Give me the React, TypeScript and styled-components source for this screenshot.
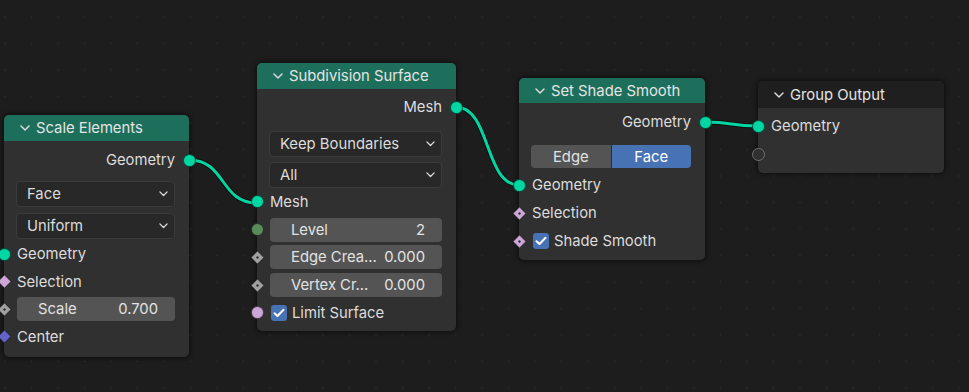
import React from "react";
import styled, { createGlobalStyle } from "styled-components";

const GlobalStyle = createGlobalStyle`
    html, body {
        margin: 0;
        padding: 0;
        background: #1d1d1d;
    }
    * {
        box-sizing: border-box;
    }
`;

const GEO = "#00d6a3";

type SocketShape = "circle" | "diamond" | "diamondDot" | "hollow";

interface SocketDef {
    shape: SocketShape;
    color: string;
}

const Canvas = styled.div`
    position: relative;
    width: 969px;
    height: 392px;
    overflow: hidden;
    background-color: #1d1d1d;
    background-image: radial-gradient(circle, #262626 0.9px, transparent 1.3px);
    background-size: 26.5px 26.5px;
    background-position: -8.25px 3.75px;
    font-family: "Inter", "Noto Sans", "DejaVu Sans", sans-serif;
    font-size: 14.8px;
    color: #dcdcdc;
`;

const Links = styled.svg`
    position: absolute;
    left: 0;
    top: 0;
`;

const NodeBox = styled.div<{ $x: number; $y: number; $w: number }>`
    position: absolute;
    left: ${(p) => p.$x}px;
    top: ${(p) => p.$y}px;
    width: ${(p) => p.$w}px;
    background: #303030;
    border-radius: 5px;
    box-shadow: 0 0 5px 1px rgba(0, 0, 0, 0.55);
`;

const Header = styled.div<{ $h: number; $bg: string }>`
    height: ${(p) => p.$h}px;
    background: ${(p) => p.$bg};
    border-radius: 5px 5px 0 0;
    display: flex;
    align-items: center;
    gap: 6px;
    padding-left: 16px;
    color: #e4e4e4;
    white-space: nowrap;
`;

const Body = styled.div<{ $pt: number; $pb: number }>`
    display: flex;
    flex-direction: column;
    padding: ${(p) => p.$pt}px 0 ${(p) => p.$pb}px;
`;

const Row = styled.div<{ $h: number; $out?: boolean }>`
    position: relative;
    height: ${(p) => p.$h}px;
    display: flex;
    align-items: center;
    justify-content: ${(p) => (p.$out ? "flex-end" : "flex-start")};
    padding: 0 14px 0 13px;
    white-space: nowrap;
`;

const Spacer = styled.div<{ $h: number }>`
    height: ${(p) => p.$h}px;
`;

const WidgetRow = styled.div<{ $mt: number }>`
    margin-top: ${(p) => p.$mt}px;
    padding: 0 14px 0 12px;
`;

const Socket = styled.span<{ $shape: SocketShape; $color: string; $out?: boolean }>`
    position: absolute;
    top: 50%;
    ${(p) => (p.$out ? "right: -6.5px;" : "left: -6.5px;")}
    width: 13px;
    height: 13px;
    margin-top: -6.5px;
    display: flex;
    align-items: center;
    justify-content: center;
    background: ${(p) => (p.$shape === "hollow" ? "#303030" : p.$color)};
    border: 1px solid ${(p) => (p.$shape === "hollow" ? "#707070" : "rgba(0,0,0,0.6)")};
    border-radius: ${(p) => (p.$shape === "circle" || p.$shape === "hollow" ? "50%" : "1px")};
    transform: ${(p) => (p.$shape === "circle" || p.$shape === "hollow" ? "none" : "rotate(45deg) scale(0.76)")};

    &::after {
        content: "";
        display: ${(p) => (p.$shape === "diamondDot" ? "block" : "none")};
        width: 3px;
        height: 3px;
        background: #2a2a2a;
        border-radius: 1px;
    }
`;

const Dropdown = styled.div`
    height: 26px;
    background: #282828;
    border: 1px solid #3b3b3b;
    border-radius: 4px;
    display: flex;
    align-items: center;
    justify-content: space-between;
    padding: 0 6px 0 10px;
`;

const Field = styled.div`
    height: 24px;
    width: 100%;
    background: #545454;
    border-radius: 4px;
    display: flex;
    align-items: center;
    justify-content: space-between;
    padding: 0 17px 0 21px;
    color: #e2e2e2;
`;

const Toggle = styled.div`
    height: 23px;
    display: flex;
    border-radius: 4px;
    overflow: hidden;
`;

const ToggleOption = styled.div<{ $active?: boolean }>`
    flex: 1;
    display: flex;
    align-items: center;
    justify-content: center;
    background: ${(p) => (p.$active ? "#4772b3" : "#545454")};
    color: ${(p) => (p.$active ? "#ffffff" : "#e2e2e2")};
    border-left: ${(p) => (p.$active ? "1px solid #2d2d2d" : "none")};
`;

const Check = styled.span`
    width: 16px;
    height: 16px;
    border-radius: 3px;
    background: #4772b3;
    display: inline-flex;
    align-items: center;
    justify-content: center;
    margin-right: 5px;
    margin-left: 1px;
`;

const Chevron = ({ size = 10 }: { size?: number }) => (
    <svg width={size} height={size * 0.6} viewBox="0 0 10 6">
        <path d="M1 1 L5 5 L9 1" fill="none" stroke="#dadada" strokeWidth="1.5" strokeLinecap="round" strokeLinejoin="round" />
    </svg>
);

const CheckMark = () => (
    <svg width="12" height="10" viewBox="0 0 12 10">
        <path d="M1.5 5.2 L4.5 8 L10.5 1.8" fill="none" stroke="#ffffff" strokeWidth="2" strokeLinecap="round" strokeLinejoin="round" />
    </svg>
);

const OutRow = ({ label, h }: { label: string; h: number }) => (
    <Row $h={h} $out>
        {label}
        <Socket $shape="circle" $color={GEO} $out />
    </Row>
);

const InRow = ({ socket, h, children }: { socket: SocketDef; h: number; children?: React.ReactNode }) => (
    <Row $h={h}>
        <Socket $shape={socket.shape} $color={socket.color} />
        {children}
    </Row>
);

const Select = ({ value, mt }: { value: string; mt: number }) => (
    <WidgetRow $mt={mt}>
        <Dropdown>
            <span>{value}</span>
            <Chevron size={9} />
        </Dropdown>
    </WidgetRow>
);

const NumberField = ({ label, value }: { label: string; value: string }) => (
    <Field>
        <span>{label}</span>
        <span>{value}</span>
    </Field>
);

const pink = "#cca6d6";
const grey = "#a1a1a1";

const links = [
    [189, 160, 257, 203],
    [456, 107, 519, 185],
    [705, 122, 758, 126],
];

const linkPath = ([x1, y1, x2, y2]: number[]) => {
    const d = Math.abs(x2 - x1) * 0.55;
    return `M${x1} ${y1} C${x1 + d} ${y1} ${x2 - d} ${y2} ${x2} ${y2}`;
};

const App = () => (
    <>
        <GlobalStyle />
        <Canvas>
            <Links width="969" height="392">
                {links.map((l, i) => (
                    <g key={i}>
                        <path d={linkPath(l)} fill="none" stroke="rgba(0,0,0,0.5)" strokeWidth="5" />
                        <path d={linkPath(l)} fill="none" stroke={GEO} strokeWidth="3" />
                    </g>
                ))}
            </Links>

            <NodeBox $x={4} $y={115} $w={185}>
                <Header $h={26} $bg="#1d6f5b">
                    <Chevron />
                    Scale Elements
                </Header>
                <Body $pt={6} $pb={6.5}>
                    <OutRow label="Geometry" h={26} />
                    <Select value="Face" mt={8} />
                    <Select value="Uniform" mt={6} />
                    <Spacer $h={1.5} />
                    <InRow h={27.5} socket={{ shape: "circle", color: GEO }}>Geometry</InRow>
                    <InRow h={27.5} socket={{ shape: "diamond", color: pink }}>Selection</InRow>
                    <InRow h={27.5} socket={{ shape: "diamondDot", color: grey }}>
                        <NumberField label="Scale" value="0.700" />
                    </InRow>
                    <InRow h={27.5} socket={{ shape: "diamond", color: "#6363c7" }}>Center</InRow>
                </Body>
            </NodeBox>

            <NodeBox $x={257} $y={63} $w={199}>
                <Header $h={26} $bg="#1d6f5b">
                    <Chevron />
                    Subdivision Surface
                </Header>
                <Body $pt={5} $pb={4}>
                    <OutRow label="Mesh" h={26} />
                    <Select value="Keep Boundaries" mt={11} />
                    <Select value="All" mt={5} />
                    <InRow h={27.75} socket={{ shape: "circle", color: GEO }}>Mesh</InRow>
                    <InRow h={27.75} socket={{ shape: "circle", color: "#598c5c" }}>
                        <NumberField label="Level" value="2" />
                    </InRow>
                    <InRow h={27.75} socket={{ shape: "diamondDot", color: grey }}>
                        <NumberField label="Edge Crea..." value="0.000" />
                    </InRow>
                    <InRow h={27.75} socket={{ shape: "diamondDot", color: grey }}>
                        <NumberField label="Vertex Cr..." value="0.000" />
                    </InRow>
                    <InRow h={27.75} socket={{ shape: "circle", color: pink }}>
                        <Check><CheckMark /></Check>
                        Limit Surface
                    </InRow>
                </Body>
            </NodeBox>

            <NodeBox $x={519} $y={78} $w={186}>
                <Header $h={25} $bg="#1d6f5b">
                    <Chevron />
                    Set Shade Smooth
                </Header>
                <Body $pt={6} $pb={5}>
                    <OutRow label="Geometry" h={26} />
                    <WidgetRow $mt={10}>
                        <Toggle>
                            <ToggleOption>Edge</ToggleOption>
                            <ToggleOption $active>Face</ToggleOption>
                        </Toggle>
                    </WidgetRow>
                    <Spacer $h={3} />
                    <InRow h={28} socket={{ shape: "circle", color: GEO }}>Geometry</InRow>
                    <InRow h={28} socket={{ shape: "diamondDot", color: pink }}>Selection</InRow>
                    <InRow h={28} socket={{ shape: "diamondDot", color: pink }}>
                        <Check><CheckMark /></Check>
                        Shade Smooth
                    </InRow>
                </Body>
            </NodeBox>

            <NodeBox $x={758} $y={81} $w={186}>
                <Header $h={27} $bg="#1f1f1f">
                    <Chevron />
                    Group Output
                </Header>
                <Body $pt={4} $pb={5}>
                    <InRow h={28} socket={{ shape: "circle", color: GEO }}>Geometry</InRow>
                    <InRow h={28} socket={{ shape: "hollow", color: "#303030" }} />
                </Body>
            </NodeBox>
        </Canvas>
    </>
);

export default App;
